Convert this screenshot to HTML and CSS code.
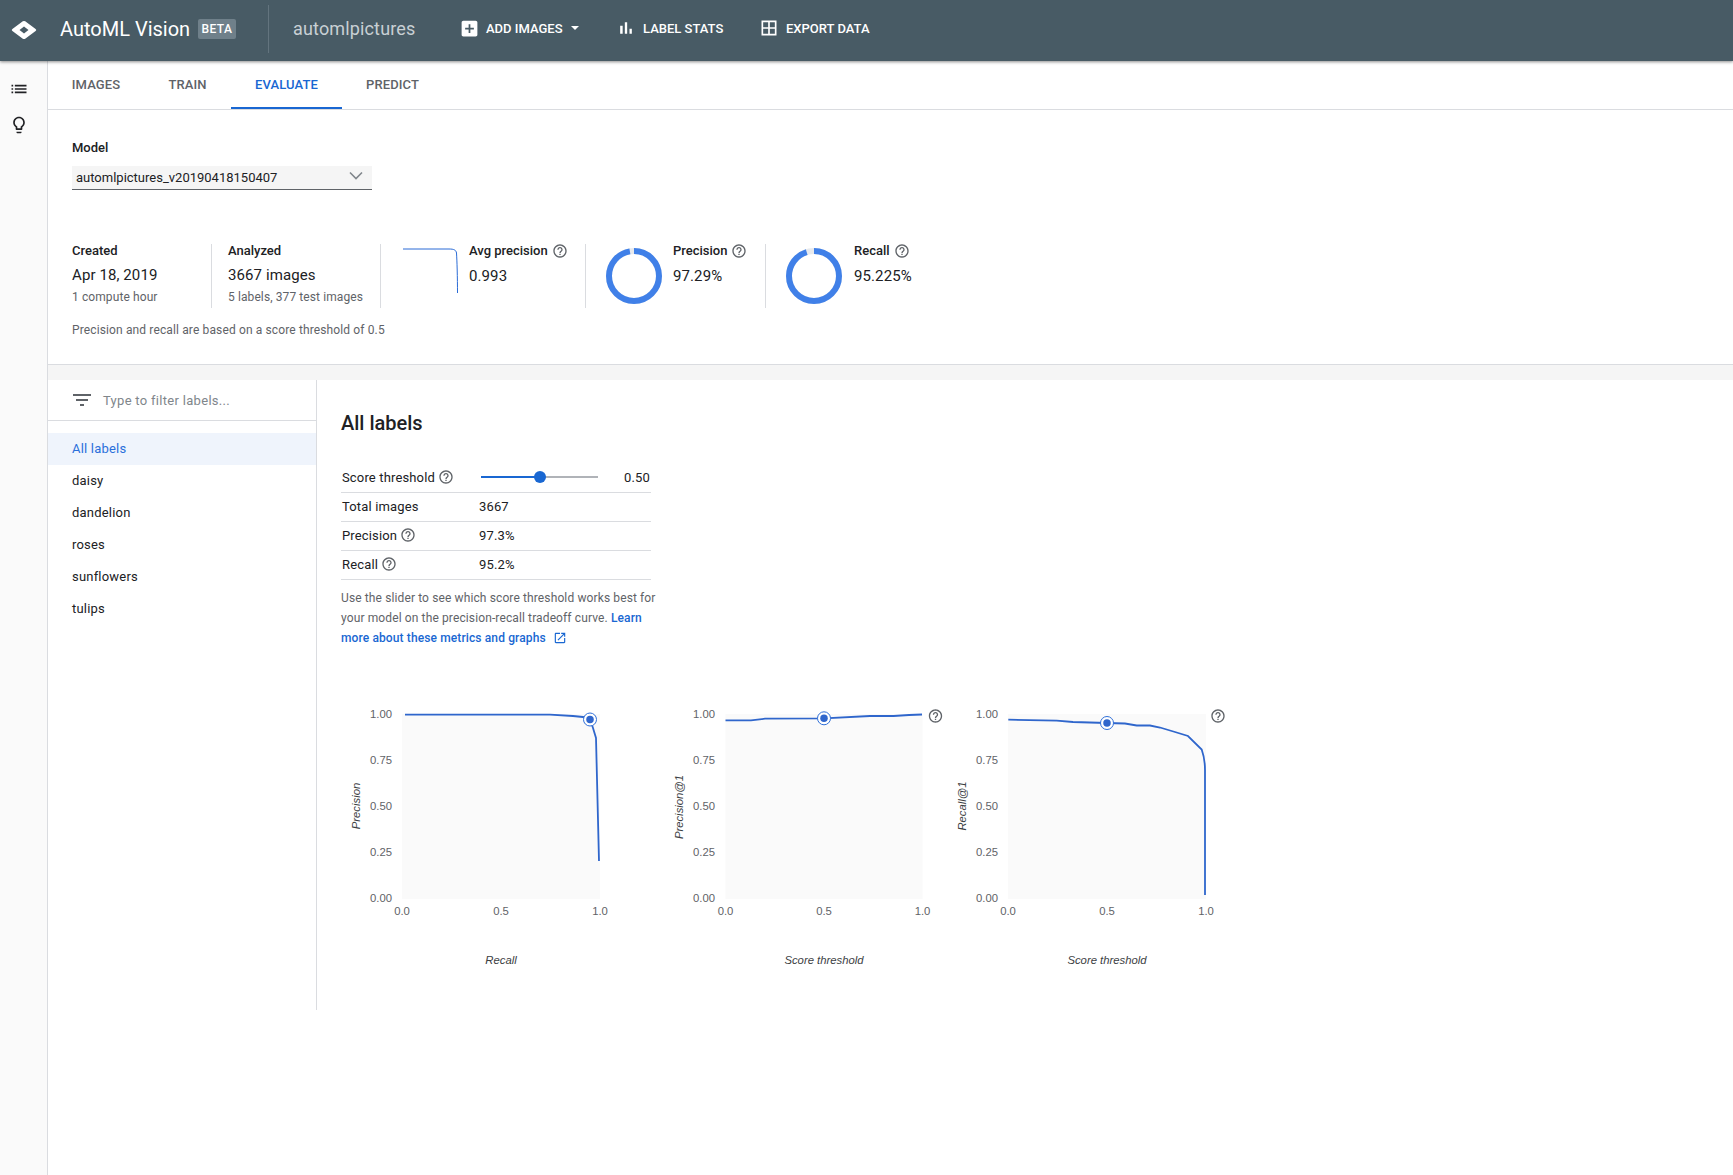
FILE: index.html
```html
<!DOCTYPE html>
<html lang="en">
<head>
<meta charset="utf-8">
<title>AutoML Vision</title>
<link rel="stylesheet" href="styles.css">
</head>
<body>
<svg class="sprite" aria-hidden="true">
  <symbol id="i-help" viewBox="0 0 24 24"><path d="M11 18h2v-2h-2v2zm1-16C6.48 2 2 6.48 2 12s4.48 10 10 10 10-4.48 10-10S17.52 2 12 2zm0 18c-4.41 0-8-3.59-8-8s3.59-8 8-8 8 3.59 8 8-3.59 8-8 8zm0-14c-2.21 0-4 1.79-4 4h2c0-1.1.9-2 2-2s2 .9 2 2c0 2-3 1.75-3 5h2c0-2.25 3-2.5 3-5 0-2.21-1.79-4-4-4z"/></symbol>
</svg>

<header class="topbar">
  <svg class="logo" viewBox="0 0 26 20"><path fill-rule="evenodd" d="M11.800 1.300Q13 .5 14.200 1.300L24.600 9Q26 10 24.600 11L14.200 18.700Q13 19.500 11.800 18.700L1.400 11Q0 10 1.400 9ZM13 6.500 8.500 10 13 13.500 17.500 10Z" fill="#fff"/></svg>
  <span class="product">AutoML Vision</span>
  <span class="beta">BETA</span>
  <span class="bar-divider"></span>
  <span class="dataset">automlpictures</span>
  <a class="action action-add">
    <svg class="action-icon" viewBox="0 0 24 24"><path d="M19 3H5c-1.11 0-2 .9-2 2v14c0 1.1.89 2 2 2h14c1.1 0 2-.9 2-2V5c0-1.1-.9-2-2-2zm-2 10h-4v4h-2v-4H7v-2h4V7h2v4h4v2z"/></svg>
    ADD IMAGES<span class="caret"></span>
  </a>
  <a class="action action-stats">
    <svg class="action-icon" viewBox="0 0 24 24"><path d="M5 9.2h3V19H5zM10.6 5h2.8v14h-2.8zm5.6 8H19v6h-2.8z"/></svg>
    LABEL STATS
  </a>
  <a class="action action-export">
    <svg class="action-icon" viewBox="0 0 24 24"><path d="M3 3v18h18V3H3zm8 16H5v-6h6v6zm0-8H5V5h6v6zm8 8h-6v-6h6v6zm0-8h-6V5h6v6z"/></svg>
    EXPORT DATA
  </a>
</header>

<div class="shell">
  <nav class="rail">
    <svg class="rail-icon" viewBox="0 0 24 24"><path d="M3 13h2v-2H3v2zm0 4h2v-2H3v2zm0-8h2V7H3v2zm4 4h14v-2H7v2zm0 4h14v-2H7v2zM7 7v2h14V7H7z"/></svg>
    <svg class="rail-icon" viewBox="0 0 24 24"><path d="M9 21c0 .55.45 1 1 1h4c.55 0 1-.45 1-1v-1H9v1zm3-19C8.14 2 5 5.14 5 9c0 2.38 1.19 4.47 3 5.74V17c0 .55.45 1 1 1h6c.55 0 1-.45 1-1v-2.26c1.81-1.27 3-3.36 3-5.74 0-3.86-3.14-7-7-7zm2.85 11.1l-.85.6V16h-4v-2.3l-.85-.6C7.8 12.16 7 10.63 7 9c0-2.76 2.24-5 5-5s5 2.24 5 5c0 1.63-.8 3.16-2.15 4.1z"/></svg>
  </nav>

  <main class="page">
    <div class="tabs">
      <a class="tab tab-images">IMAGES</a>
      <a class="tab tab-train">TRAIN</a>
      <a class="tab tab-evaluate">EVALUATE</a>
      <a class="tab tab-predict">PREDICT</a>
    </div>

    <section class="summary">
      <div class="field-label">Model</div>
      <div class="select">
        <span>automlpictures_v20190418150407</span>
        <svg class="chevron" viewBox="0 0 14 9"><path d="M1 1.500 7 7.500 13 1.500" fill="none" stroke="#80868b" stroke-width="1.6"/></svg>
      </div>

      <div class="stats">
        <div class="stat stat-created">
          <div class="stat-label">Created</div>
          <div class="stat-value">Apr 18, 2019</div>
          <div class="stat-sub">1 compute hour</div>
        </div>
        <div class="stat stat-analyzed">
          <div class="stat-label">Analyzed</div>
          <div class="stat-value">3667 images</div>
          <div class="stat-sub">5 labels, 377 test images</div>
        </div>
        <div class="stat stat-avg stat-metric">
          <svg class="spark" viewBox="0 0 55 46"><path d="M0 1H46C51 1 53 2 53.500 5 54 12 54.500 30 54.500 45" fill="none" stroke="#2a6bd6" stroke-width="1"/></svg>
          <div>
            <div class="stat-label">Avg precision <svg class="help"><use href="#i-help"/></svg></div>
            <div class="stat-value">0.993</div>
          </div>
        </div>
        <div class="stat stat-precision stat-metric">
          <svg class="donut" viewBox="0 0 56 56"><circle cx="28" cy="28" r="25" class="donut-bg"/><circle cx="28" cy="28" r="25" class="donut-arc donut-arc-p" pathLength="100"/></svg>
          <div>
            <div class="stat-label">Precision <svg class="help"><use href="#i-help"/></svg></div>
            <div class="stat-value">97.29%</div>
          </div>
        </div>
        <div class="stat stat-recall stat-metric">
          <svg class="donut" viewBox="0 0 56 56"><circle cx="28" cy="28" r="25" class="donut-bg"/><circle cx="28" cy="28" r="25" class="donut-arc donut-arc-r" pathLength="100"/></svg>
          <div>
            <div class="stat-label">Recall <svg class="help"><use href="#i-help"/></svg></div>
            <div class="stat-value">95.225%</div>
          </div>
        </div>
      </div>

      <p class="note">Precision and recall are based on a score threshold of 0.5</p>
    </section>

    <div class="band"></div>

    <div class="detail">
      <aside class="labels">
        <div class="filter">
          <svg class="filter-icon" viewBox="3 6 18 12"><path d="M10 18h4v-2h-4v2zM3 6v2h18V6H3zm3 7h12v-2H6v2z"/></svg>
          <span>Type to filter labels...</span>
        </div>
        <ul class="label-list">
          <li class="label-item label-active">All labels</li>
          <li class="label-item">daisy</li>
          <li class="label-item">dandelion</li>
          <li class="label-item">roses</li>
          <li class="label-item">sunflowers</li>
          <li class="label-item">tulips</li>
        </ul>
      </aside>

      <section class="metrics">
        <h2 class="metrics-title">All labels</h2>
        <div class="table">
          <div class="row">
            <div class="cell-name">Score threshold <svg class="help"><use href="#i-help"/></svg></div>
            <div class="slider"><span class="slider-fill"></span><span class="slider-thumb"></span></div>
            <div class="slider-value">0.50</div>
          </div>
          <div class="row">
            <div class="cell-name">Total images</div>
            <div>3667</div>
          </div>
          <div class="row">
            <div class="cell-name">Precision <svg class="help"><use href="#i-help"/></svg></div>
            <div>97.3%</div>
          </div>
          <div class="row">
            <div class="cell-name">Recall <svg class="help"><use href="#i-help"/></svg></div>
            <div>95.2%</div>
          </div>
        </div>
        <p class="explain">Use the slider to see which score threshold works best for your model on the precision-recall tradeoff curve. <a class="link">Learn more about these metrics and graphs <svg class="ext" viewBox="0 0 24 24"><path d="M19 19H5V5h7V3H5c-1.11 0-2 .9-2 2v14c0 1.1.89 2 2 2h14c1.1 0 2-.9 2-2v-7h-2v7zM14 3v2h3.590l-9.830 9.830 1.410 1.410L19 6.410V10h2V3h-7z"/></svg></a></p>

        <div class="charts">
          <svg class="chart chart-a" viewBox="341 700 324 270">
            <rect class="plot" x="402" y="714" width="198" height="185"/>
            <g class="ticks-y"><text x="392" y="718">1.00</text><text x="392" y="764">0.75</text><text x="392" y="810">0.50</text><text x="392" y="856">0.25</text><text x="392" y="902">0.00</text></g>
            <g class="ticks-x"><text x="402" y="915">0.0</text><text x="501" y="915">0.5</text><text x="600" y="915">1.0</text></g>
            <text class="axis-title" x="501" y="964">Recall</text>
            <text class="axis-title" transform="translate(360 806) rotate(-90)">Precision</text>
            <path class="curve" d="M405 714.700H550L573 716 583 717 590 719 593 728 596 738 599 861"/>
            <circle class="marker-ring" cx="590" cy="719.500" r="6.500"/><circle class="marker-dot" cx="590" cy="719.500" r="3.750"/>
          </svg>
          <svg class="chart chart-b" viewBox="665 700 282 270">
            <rect class="plot" x="725.500" y="714" width="197" height="185"/>
            <g class="ticks-y"><text x="715" y="718">1.00</text><text x="715" y="764">0.75</text><text x="715" y="810">0.50</text><text x="715" y="856">0.25</text><text x="715" y="902">0.00</text></g>
            <g class="ticks-x"><text x="725.500" y="915">0.0</text><text x="824" y="915">0.5</text><text x="922.500" y="915">1.0</text></g>
            <text class="axis-title" x="824" y="964">Score threshold</text>
            <text class="axis-title" transform="translate(683 807) rotate(-90)">Precision@1</text>
            <path class="curve" d="M725.500 720.300 751 720.300 765 718.700 824 718.300 870 716 893.600 716 909 715 922 714.500"/>
            <circle class="marker-ring" cx="824" cy="718.300" r="6.500"/><circle class="marker-dot" cx="824" cy="718.300" r="3.750"/>
            <use href="#i-help" class="chart-help" x="927.500" y="708" width="16" height="16"/>
          </svg>
          <svg class="chart chart-c" viewBox="947 700 283 270">
            <rect class="plot" x="1008" y="714" width="198" height="185"/>
            <g class="ticks-y"><text x="998" y="718">1.00</text><text x="998" y="764">0.75</text><text x="998" y="810">0.50</text><text x="998" y="856">0.25</text><text x="998" y="902">0.00</text></g>
            <g class="ticks-x"><text x="1008" y="915">0.0</text><text x="1107" y="915">0.5</text><text x="1206" y="915">1.0</text></g>
            <text class="axis-title" x="1107" y="964">Score threshold</text>
            <text class="axis-title" transform="translate(966 806) rotate(-90)">Recall@1</text>
            <path class="curve" d="M1008.300 719.700 1056.700 720.700 1073 722 1106.700 723 1125 723.500 1136.700 725.500 1150 725.500 1160 727.500 1175 732 1188 736 1201.700 749.500C1204 756 1205 762 1205 770V895"/>
            <circle class="marker-ring" cx="1107" cy="723" r="6.500"/><circle class="marker-dot" cx="1107" cy="723" r="3.750"/>
            <use href="#i-help" class="chart-help" x="1210" y="708" width="16" height="16"/>
          </svg>
        </div>
      </section>
    </div>
  </main>
</div>
</body>
</html>
```

FILE: styles.css
```css
* { box-sizing: border-box; }
html, body { margin: 0; height: 100%; }
body {
  font-family: Roboto, "Liberation Sans", sans-serif;
  font-size: 13px;
  color: #202124;
  background: #fff;
  overflow: hidden;
  height: 1175px;
}
.sprite { width: 0; height: 0; overflow: hidden; display: block; }

/* top bar */
.topbar {
  height: 61px;
  background: #485b65;
  color: #fff;
  display: flex;
  align-items: center;
  box-shadow: 0 1px 3px rgba(0,0,0,.45);
  position: relative;
  z-index: 2;
  padding-bottom: 3px;
}
.logo { width: 26px; height: 20px; margin-left: 11px; margin-top: 1px; flex: none; }
.product { margin-left: 23px; font-size: 20px; width: 138px; }
.beta {
  background: #6f808a; font-size: 12px; font-weight: 500; letter-spacing: .4px;
  width: 38px; height: 20px; line-height: 20px; text-align: center; border-radius: 2px;
  margin-right: 32px;
}
.bar-divider { width: 1px; height: 48px; background: #63747e; }
.dataset { margin-left: 24px; margin-bottom: 2px; font-size: 18px; color: #c8d0d4; width: 166px; letter-spacing: .15px; }
.action { display: flex; align-items: center; font-weight: 500; font-size: 13px; white-space: nowrap; margin-bottom: 2px; }
.action-icon { width: 20px; height: 20px; fill: #fff; margin-right: 7px; flex: none; }
.action-add { width: 157px; }
.action-add .action-icon { width: 21px; height: 21px; margin-right: 6px; }
.action-stats { width: 143px; }
.caret { width: 0; height: 0; border: 4px solid transparent; border-top: 4px solid #fff; border-bottom: 0; margin-left: 8px; }

/* shell */
.shell { display: flex; height: 1114px; }
.rail { width: 48px; flex: none; background: #fafafa; border-right: 1px solid #dadce0; padding-top: 18px; display: flex; flex-direction: column; align-items: center; gap: 16px; padding-right: 9px; }
.rail-icon { width: 20px; height: 20px; fill: #202124; flex: none; }
.page { flex: 1; min-width: 0; }

/* tabs */
.tabs { height: 49px; border-bottom: 1px solid #dadce0; display: flex; }
.tab { height: 48px; line-height: 48px; font-weight: 500; color: #5f6368; font-size: 13px; text-align: center; letter-spacing: .1px; }
.tab-images { width: 96px; }
.tab-train { width: 86px; padding-left: 1px; }
.tab-evaluate { width: 111px; color: #1967d2; border-bottom: 2px solid #1967d2; margin-left: 1px; }
.tab-predict { width: 100px; padding-left: 1px; }

/* summary */
.summary { height: 254px; padding: 30px 24px 0; }
.field-label { font-weight: 500; line-height: 16px; }
.select {
  margin-top: 10px; width: 300px; height: 24px; background: #f5f5f5;
  border-bottom: 1px solid #5f6368; display: flex; align-items: center; justify-content: space-between;
  padding: 0 9px 0 4px;
}
.chevron { width: 14px; height: 9px; margin-top: -4px; }
.stats { display: flex; margin-top: 54px; height: 64px; }
.stat { border-right: 1px solid #dadce0; flex: none; }
.stat-created { width: 140px; }
.stat-analyzed { width: 169px; padding-left: 16px; }
.stat-avg { width: 205px; padding-left: 22px; display: flex; }
.stat-precision { width: 180px; padding-left: 20px; display: flex; }
.stat-recall { border-right: 0; padding-left: 20px; display: flex; }
.stat-label { font-weight: 500; height: 13px; line-height: 13px; white-space: nowrap; display: flex; align-items: center; gap: 4px; }
.stat-value { font-size: 15px; letter-spacing: .1px; line-height: 16px; margin-top: 10px; white-space: nowrap; }
.stat-metric .stat-value { margin-top: 11px; }
.stat-sub { font-size: 12px; line-height: 16px; margin-top: 6px; color: #5f6368; white-space: nowrap; letter-spacing: .1px; }
.spark { width: 55px; height: 46px; margin: 4px 11px 0 0; flex: none; }
.donut { width: 56px; height: 56px; margin: 4px 11px 0 0; flex: none; }
.stat-recall .donut { margin-right: 12px; }
.donut circle { fill: none; stroke-width: 6; }
.donut-bg { stroke: #e8eaed; }
.donut-arc { stroke: #4080e8; transform-origin: 28px 28px; transform: rotate(-90deg); }
.donut-arc-p { stroke-dasharray: 97.29 100; }
.donut-arc-r { stroke-dasharray: 95.225 100; }
.help { width: 16px; height: 16px; fill: #5f6368; flex: none; }
.note { margin: 14px 0 0; font-size: 12px; line-height: 16px; color: #5f6368; letter-spacing: .13px; }

.band { height: 16px; background: #f5f5f5; border-top: 1px solid #dadce0; }

/* details */
.detail { display: flex; }
.labels { width: 269px; height: 630px; border-right: 1px solid #dadce0; flex: none; }
.filter { height: 41px; border-bottom: 1px solid #dadce0; display: flex; align-items: center; padding-left: 25px; color: #80868b; font-size: 13px; letter-spacing: .3px; }
.filter-icon { width: 18px; height: 12px; fill: #5f6368; margin-right: 12px; }
.label-list { list-style: none; margin: 12px 0 0; padding: 0; }
.label-item { height: 32px; line-height: 32px; padding-left: 24px; letter-spacing: .2px; }
.label-active { background: #eff4fc; color: #2a6fdb; }

.metrics { padding: 31px 0 0 24px; flex: 1; }
.metrics-title { margin: 0; font-size: 20px; font-weight: 500; line-height: 24px; }
.table { margin-top: 29px; width: 310px; }
.row { height: 29px; border-bottom: 1px solid #dadce0; display: flex; align-items: center; padding: 0 0 2px 1px; letter-spacing: .15px; }
.cell-name { width: 137px; display: flex; align-items: center; gap: 3px; flex: none; }
.slider { width: 117px; height: 2px; background: #b0b3b8; margin-left: 2px; position: relative; }
.slider-fill { display: block; width: 59px; height: 2px; background: #1967d2; }
.slider-thumb { position: absolute; left: 53px; top: -5px; width: 12px; height: 12px; border-radius: 50%; background: #1967d2; }
.slider-value { margin-left: 26px; }
.explain { margin: 8px 0 0; width: 320px; font-size: 12px; line-height: 20px; color: #5f6368; letter-spacing: .12px; }
.link { color: #1967d2; font-weight: 500; }
.ext { width: 14px; height: 14px; fill: #1967d2; vertical-align: -3px; margin-left: 4px; }

/* charts */
.charts { display: flex; margin-top: 52px; }
.chart { height: 270px; flex: none; display: block; font-family: "Liberation Sans", Arial, sans-serif; font-size: 11.3px; }
.chart-a { width: 324px; }
.chart-b { width: 282px; }
.chart-c { width: 283px; }
.plot { fill: #fafafa; }
.ticks-y text { text-anchor: end; fill: #5f6368; }
.ticks-x text { text-anchor: middle; fill: #5f6368; }
.axis-title { text-anchor: middle; font-style: italic; fill: #3c4043; }
.curve { fill: none; stroke: #2f66cc; stroke-width: 1.8; }
.marker-ring { fill: #fff; stroke: #2f6fd8; stroke-width: 1; }
.marker-dot { fill: #2f66cc; }
.chart-help { fill: #5f6368; }
```
